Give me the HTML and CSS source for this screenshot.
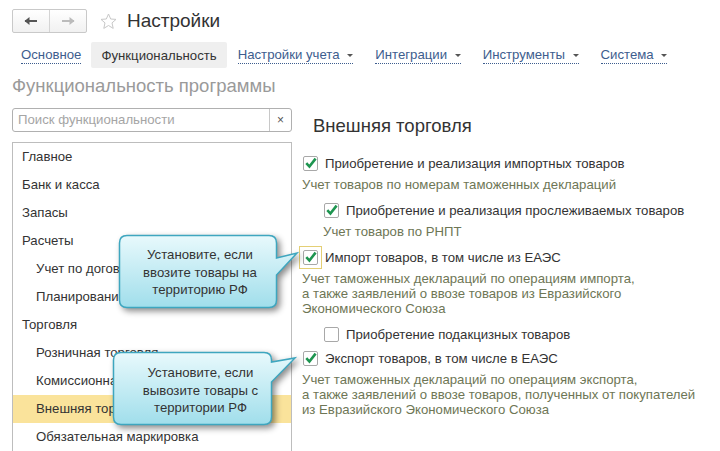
FILE: index.html
```html
<html><head>
	<title>Настройки</title>
	<link rel="stylesheet" href="styles.css">
</head>
<body>
	<div class="topbar">
		<div class="nav">
			<span class="nav-btn">
				<svg width="14" height="10" viewBox="0 0 14 10"><path d="M1 5 H13" stroke="#555" stroke-width="2"/><path d="M0.5 5 L5.5 1 V9 Z" fill="#555"/></svg>
			</span>
			<span class="nav-btn off">
				<svg width="14" height="10" viewBox="0 0 14 10"><path d="M1 5 H13" stroke="#bbb" stroke-width="2"/><path d="M13.5 5 L8.5 1 V9 Z" fill="#bbb"/></svg>
			</span>
		</div>
		<svg class="star" width="17" height="17" viewBox="0 0 17 17"><path d="M8.5 1 L10.7 6 L16 6.4 L12 9.9 L13.2 15.4 L8.5 12.5 L3.8 15.4 L5 9.9 L1 6.4 L6.3 6 Z" fill="none" stroke="#c8c8c8" stroke-width="1"/></svg>
		<h1 class="title">Настройки</h1>
	</div>

	<div class="tabs">
		<a class="tab first"><span class="link">Основное</span></a>
		<a class="tab active">Функциональность</a>
		<a class="tab"><span class="link">Настройки учета <i class="caret"></i></span></a>
		<a class="tab"><span class="link">Интеграции <i class="caret"></i></span></a>
		<a class="tab"><span class="link">Инструменты <i class="caret"></i></span></a>
		<a class="tab"><span class="link">Система <i class="caret"></i></span></a>
	</div>

	<h2 class="page-title">Функциональность программы</h2>

	<div class="main">
		<div class="left">
			<div class="search">
				<span class="placeholder">Поиск функциональности</span>
				<span class="clear">×</span>
			</div>
			<ul class="sections">
				<li>Главное</li>
				<li>Банк и касса</li>
				<li>Запасы</li>
				<li>Расчеты</li>
				<li class="sub">Учет по договорам</li>
				<li class="sub">Планирование</li>
				<li>Торговля</li>
				<li class="sub">Розничная торговля</li>
				<li class="sub">Комиссионная торговля</li>
				<li class="sub selected">Внешняя торговля</li>
				<li class="sub">Обязательная маркировка</li>
			</ul>
		</div>

		<div class="right">
			<h3 class="section-title">Внешняя торговля</h3>

			<div class="opt">
				<svg class="cb" width="15" height="15" viewBox="0 0 15 15"><rect x=".5" y=".5" width="14" height="14" rx="1.5" fill="#fff" stroke="#a8a8a8"/><path d="M3.3 7.2 L6.4 10.6 L12.6 2.6" fill="none" stroke="#1e9550" stroke-width="2.6"/></svg>
				<span>Приобретение и реализация импортных товаров</span>
			</div>
			<div class="desc">Учет товаров по номерам таможенных деклараций</div>

			<div class="opt sub">
				<svg class="cb" width="15" height="15" viewBox="0 0 15 15"><rect x=".5" y=".5" width="14" height="14" rx="1.5" fill="#fff" stroke="#a8a8a8"/><path d="M3.3 7.2 L6.4 10.6 L12.6 2.6" fill="none" stroke="#1e9550" stroke-width="2.6"/></svg>
				<span>Приобретение и реализация прослеживаемых товаров</span>
			</div>
			<div class="desc sub">Учет товаров по РНПТ</div>

			<div class="opt">
				<svg class="cb focus" width="15" height="15" viewBox="0 0 15 15"><rect x=".5" y=".5" width="14" height="14" rx="1.5" fill="#fff" stroke="#a8a8a8"/><path d="M3.3 7.2 L6.4 10.6 L12.6 2.6" fill="none" stroke="#1e9550" stroke-width="2.6"/></svg>
				<span>Импорт товаров, в том числе из ЕАЭС</span>
			</div>
			<div class="desc">Учет таможенных деклараций по операциям импорта,<br>а также заявлений о ввозе товаров из Евразийского<br>Экономического Союза</div>

			<div class="opt sub after-desc">
				<svg class="cb" width="15" height="15" viewBox="0 0 15 15"><rect x=".5" y=".5" width="14" height="14" rx="1.5" fill="#fff" stroke="#a8a8a8"/></svg>
				<span>Приобретение подакцизных товаров</span>
			</div>

			<div class="opt">
				<svg class="cb" width="15" height="15" viewBox="0 0 15 15"><rect x=".5" y=".5" width="14" height="14" rx="1.5" fill="#fff" stroke="#a8a8a8"/><path d="M3.3 7.2 L6.4 10.6 L12.6 2.6" fill="none" stroke="#1e9550" stroke-width="2.6"/></svg>
				<span>Экспорт товаров, в том числе в ЕАЭС</span>
			</div>
			<div class="desc">Учет таможенных деклараций по операциям экспорта,<br>а также заявлений о ввозе товаров, полученных от покупателей<br>из Евразийского Экономического Союза</div>
		</div>
	</div>

	<!-- подсказки поверх формы -->
	<div class="callout" id="callout1">
		<svg class="bubble" width="158" height="73" viewBox="0 0 158 73">
			<defs><linearGradient id="g1" x1="0" y1="0" x2="0" y2="1"><stop offset="0" stop-color="#e8f9fc"/><stop offset="1" stop-color="#a0deeb"/></linearGradient></defs>
			<path d="M8,0.5 H150 Q157.5,0.5 157.5,8 V23 L178,18 L157.5,40 V65 Q157.5,72.5 150,72.5 H8 Q0.5,72.5 0.5,65 V8 Q0.5,0.5 8,0.5 Z" fill="url(#g1)" stroke="#3ea6bf" stroke-width="1.5"/>
		</svg>
		<div class="callout-text">Установите, если<br>ввозите товары на<br>территорию РФ</div>
	</div>

	<div class="callout" id="callout2">
		<svg class="bubble" width="159" height="73" viewBox="0 0 159 73">
			<defs><linearGradient id="g2" x1="0" y1="0" x2="0" y2="1"><stop offset="0" stop-color="#e8f9fc"/><stop offset="1" stop-color="#a0deeb"/></linearGradient></defs>
			<path d="M8,0.5 H151 Q158.5,0.5 158.5,8 V10 L182,6 L158.5,30 V65 Q158.5,72.5 151,72.5 H8 Q0.5,72.5 0.5,65 V8 Q0.5,0.5 8,0.5 Z" fill="url(#g2)" stroke="#3ea6bf" stroke-width="1.5"/>
		</svg>
		<div class="callout-text">Установите, если<br>вывозите товары с<br>территории РФ</div>
	</div>
</body></html>
```

FILE: styles.css
```css
body {
	margin: 0;
	height: 451px;
	overflow: hidden;
	background: #fff;
	font-family: "Liberation Sans", Arial, sans-serif;
	font-size: 13.2px;
	color: #333;
}
.topbar {
	display: flex;
	align-items: center;
	padding: 9px 12px 0;
	height: 24px;
}
.nav {
	display: flex;
	height: 24px;
	border: 1px solid #c9c9c9;
	border-radius: 2px;
	background: linear-gradient(#fff, #f1f1f1);
	box-sizing: border-box;
}
.nav-btn {
	width: 36px;
	display: flex;
	align-items: center;
	justify-content: center;
}
.nav-btn + .nav-btn {
	border-left: 1px solid #d4d4d4;
}
.star {
	margin-left: 13px;
}
.title {
	margin: 0 0 0 10px;
	font-size: 19px;
	font-weight: normal;
	color: #333;
}
.tabs {
	display: flex;
	margin-top: 9px;
	padding-left: 11px;
}
.tab {
	height: 26px;
	padding: 0 11px;
	display: flex;
	align-items: center;
	color: #3d5d8e;
}
.tab.first {
	padding: 0 10px;
}
.tab.active {
	background: #efefef;
	border-radius: 2px;
	color: #333;
	padding: 0 10px;
}
.link {
	border-bottom: 1px dotted #3d5d8e;
	line-height: 15px;
	padding-bottom: 1px;
}
.caret {
	display: inline-block;
	margin-left: 4px;
	vertical-align: middle;
	border-left: 3px solid transparent;
	border-right: 3px solid transparent;
	border-top: 3px solid #555;
}
.page-title {
	margin: 7px 12px 0;
	font-size: 18.5px;
	line-height: 22px;
	font-weight: normal;
	color: #9a9a9a;
}
.main {
	display: grid;
	grid-template-columns: 280px 1fr;
	column-gap: 10px;
	padding-left: 12px;
	margin-top: 11px;
}
.search {
	display: flex;
	height: 24px;
	border: 1px solid #b0b0b0;
	border-radius: 3px;
	box-sizing: border-box;
}
.placeholder {
	flex: 1;
	padding-left: 5px;
	line-height: 22px;
	color: #a5a5a5;
}
.clear {
	width: 21px;
	border-left: 1px solid #c8c8c8;
	text-align: center;
	line-height: 22px;
	font-size: 12px;
	color: #555;
}
.sections {
	list-style: none;
	margin: 10px 0 0;
	padding: 0;
	border: 1px solid #bdbdbd;
	border-bottom: none;
	height: 320px;
}
.sections li {
	height: 28px;
	line-height: 28px;
	padding-left: 9px;
	white-space: nowrap;
	overflow: hidden;
}
.sections li.sub {
	padding-left: 23px;
}
.sections li.selected {
	background: #fae39b;
}
.right {
	padding-top: 8px;
}
.section-title {
	margin: 0 0 15px 11px;
	font-size: 18.5px;
	line-height: 20px;
	font-weight: normal;
	color: #333;
}
.opt {
	display: flex;
	align-items: center;
	height: 24px;
	padding-left: 1px;
	white-space: nowrap;
}
.opt .cb {
	margin-right: 7px;
	flex: none;
}
.opt.sub {
	padding-left: 22px;
}
.opt.after-desc {
	margin-top: 3px;
}
.cb.focus {
	outline: 1px solid #e4cf75;
	outline-offset: 3px;
}
.desc {
	margin: 2px 0 6px;
	line-height: 15px;
	color: #6e7655;
	white-space: nowrap;
}
.desc.sub {
	padding-left: 21px;
}
.callout {
	position: absolute;
	width: 158px;
	height: 73px;
}
#callout1 {
	left: 119px;
	top: 235px;
}
#callout2 {
	left: 113px;
	top: 352px;
	width: 159px;
}
.bubble {
	position: absolute;
	left: 0;
	top: 0;
	overflow: visible;
	filter: drop-shadow(3px 3px 3px rgba(0, 0, 0, 0.45));
}
.callout-text {
	position: relative;
	padding: 11px 0 0 4px;
	text-align: center;
	line-height: 17.5px;
	color: #333;
}
#callout2 .callout-text {
	padding: 12px 0 0 16px;
}
```
